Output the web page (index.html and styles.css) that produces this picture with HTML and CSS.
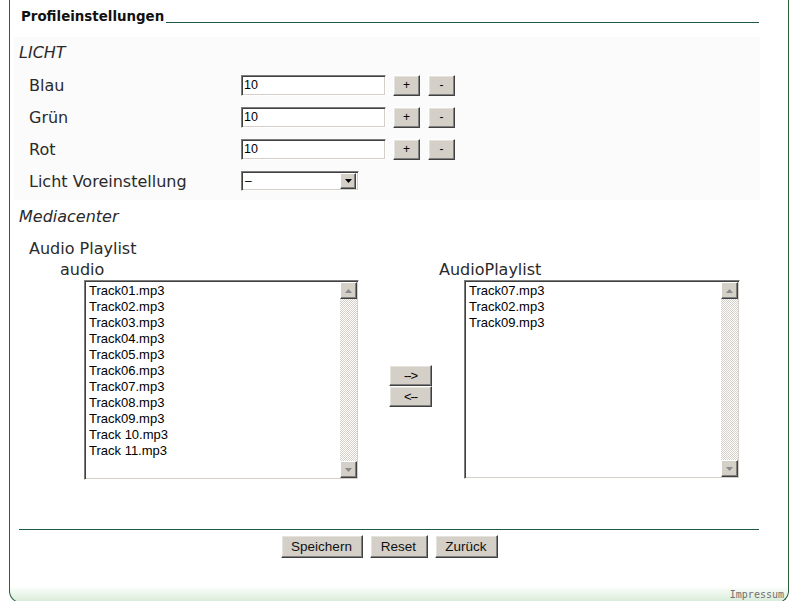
FILE: index.html
```html
<!DOCTYPE html>
<html lang="de">
<head>
<meta charset="utf-8">
<title>Profileinstellungen</title>
<link rel="stylesheet" href="styles.css">
</head>
<body>
<div class="frame">
  <div class="header"><span class="title">Profileinstellungen</span><span class="rule"></span></div>

  <div class="band">
    <div class="section-title">LICHT</div>
    <div class="row"><span class="label">Blau</span><input class="num" type="text" value="10"><button class="btn plus">+</button><button class="btn minus">-</button></div>
    <div class="row"><span class="label">Grün</span><input class="num" type="text" value="10"><button class="btn plus">+</button><button class="btn minus">-</button></div>
    <div class="row"><span class="label">Rot</span><input class="num" type="text" value="10"><button class="btn plus">+</button><button class="btn minus">-</button></div>
    <div class="row"><span class="label">Licht Voreinstellung</span>
      <div class="select"><span class="sel-val">–</span><span class="sel-btn"><svg width="7" height="4" viewBox="0 0 7 4"><polygon points="0,0 7,0 3.5,4" fill="#000"/></svg></span></div>
    </div>
  </div>

  <div class="section-title media-title">Mediacenter</div>

  <div class="media-row">
    <div class="col-left">
      <div class="cap">Audio Playlist</div>
      <div class="cap sub">audio</div>
      <div class="listbox left-list">
        <div class="items">
          <div>Track01.mp3</div><div>Track02.mp3</div><div>Track03.mp3</div><div>Track04.mp3</div>
          <div>Track05.mp3</div><div>Track06.mp3</div><div>Track07.mp3</div><div>Track08.mp3</div>
          <div>Track09.mp3</div><div>Track 10.mp3</div><div>Track 11.mp3</div>
        </div>
        <div class="scroll">
          <span class="sb-btn"><svg width="7" height="4" viewBox="0 0 7 4"><polygon points="3.5,0 7,4 0,4" fill="#8a8a8a"/></svg></span>
          <span class="track"></span>
          <span class="sb-btn"><svg width="7" height="4" viewBox="0 0 7 4"><polygon points="0,0 7,0 3.5,4" fill="#8a8a8a"/></svg></span>
        </div>
      </div>
    </div>

    <div class="mover">
      <button class="btn move">--&gt;</button>
      <button class="btn move">&lt;--</button>
    </div>

    <div class="col-right">
      <div class="cap">AudioPlaylist</div>
      <div class="listbox right-list">
        <div class="items">
          <div>Track07.mp3</div><div>Track02.mp3</div><div>Track09.mp3</div>
        </div>
        <div class="scroll">
          <span class="sb-btn"><svg width="7" height="4" viewBox="0 0 7 4"><polygon points="3.5,0 7,4 0,4" fill="#8a8a8a"/></svg></span>
          <span class="track"></span>
          <span class="sb-btn"><svg width="7" height="4" viewBox="0 0 7 4"><polygon points="0,0 7,0 3.5,4" fill="#8a8a8a"/></svg></span>
        </div>
      </div>
    </div>
  </div>

  <div class="footer-rule"></div>
  <div class="actions">
    <button class="btn action save">Speichern</button>
    <button class="btn action reset">Reset</button>
    <button class="btn action back">Zurück</button>
  </div>

  <div class="impressum">Impressum</div>
</div>
</body>
</html>
```

FILE: styles.css
```css
html, body {
  margin: 0;
  padding: 0;
  background: #ffffff;
}

body {
  font-family: "DejaVu Sans", Verdana, sans-serif;
  color: #1c1c1c;
}

.frame {
  box-sizing: border-box;
  margin-left: 9px;
  width: 780px;
  height: 603px;
  border: 1px solid #2d5f3c;
  border-top: none;
  border-radius: 0 0 12px 12px;
  display: flex;
  flex-direction: column;
  background: linear-gradient(to bottom, #ffffff 0, #ffffff calc(100% - 16px), #d6ebd6 100%);
}

/* header */
.header {
  box-sizing: border-box;
  width: 749px;
  padding: 9px 0 0 11px;
  display: flex;
  align-items: flex-end;
}

.title {
  font-weight: bold;
  font-size: 13.4px;
  line-height: 16px;
  color: #111;
}

.rule {
  flex: 1;
  margin-left: 2px;
  margin-bottom: 2px;
  border-bottom: 1px solid #1f5a48;
}

/* light section */
.band {
  margin: 12px 0 0 4px;
  width: 746px;
  background: #fbfbfb;
  padding-bottom: 3px;
}

.section-title {
  font-style: italic;
  font-size: 16px;
  line-height: 32px;
  padding-left: 5px;
  color: #2a2a2a;
}

.row {
  display: flex;
  align-items: center;
  height: 32px;
  padding-left: 15px;
}

.label {
  width: 212px;
  font-size: 16px;
  color: #2a2a2a;
}

.num {
  box-sizing: border-box;
  width: 145px;
  height: 21px;
  margin: 0;
  padding: 0 0 0 2px;
  border: 1px solid;
  border-color: #7c7c7c #ffffff #ffffff #7c7c7c;
  box-shadow: inset 1px 1px 0 #404040, inset -1px -1px 0 #d4d0c8;
  background: #fff;
  font-family: "Liberation Sans", Arial, sans-serif;
  font-size: 12.5px;
  color: #000;
  outline: none;
}

.btn {
  box-sizing: border-box;
  margin: 0;
  padding: 0;
  background: #d4d0c8;
  border: 1px solid;
  border-color: #ffffff #404040 #404040 #ffffff;
  box-shadow: inset -1px -1px 0 #808080, inset 1px 1px 0 #e6e3dd;
  font-family: "Liberation Sans", Arial, sans-serif;
  font-size: 12px;
  color: #000;
  cursor: default;
}

.plus, .minus {
  width: 27px;
  height: 21px;
  line-height: 17px;
}

.plus { margin-left: 7px; }
.minus { margin-left: 8px; }

.select {
  box-sizing: border-box;
  width: 118px;
  height: 20px;
  display: flex;
  align-items: center;
  border: 1px solid;
  border-color: #7c7c7c #ffffff #ffffff #7c7c7c;
  box-shadow: inset 1px 1px 0 #404040, inset -1px -1px 0 #d4d0c8;
  background: #fff;
  padding: 2px;
}

.sel-val {
  flex: 1;
  font-family: "Liberation Sans", Arial, sans-serif;
  font-size: 12px;
  padding-left: 1px;
  color: #000;
}

.sel-btn {
  box-sizing: border-box;
  width: 16px;
  height: 16px;
  display: flex;
  align-items: center;
  justify-content: center;
  background: #d4d0c8;
  border: 1px solid;
  border-color: #ffffff #404040 #404040 #ffffff;
  box-shadow: inset -1px -1px 0 #808080;
}

/* media section */
.media-title {
  line-height: 34px;
  padding-left: 9px;
}

.media-row {
  display: flex;
  align-items: flex-start;
  padding-top: 4px;
}

.col-left {
  padding-left: 19px;
}

.cap {
  font-size: 16px;
  line-height: 21px;
  color: #2a2a2a;
}

.cap.sub {
  padding-left: 31px;
}

.listbox {
  box-sizing: border-box;
  display: flex;
  background: #fff;
  border: 1px solid;
  border-color: #7c7c7c #ffffff #ffffff #7c7c7c;
  box-shadow: inset 1px 1px 0 #404040, inset -1px -1px 0 #d4d0c8;
  padding: 1px;
}

.left-list {
  width: 275px;
  height: 200px;
  margin-left: 55px;
}

.right-list {
  width: 276px;
  height: 199px;
  margin-left: 25px;
}

.items {
  flex: 1;
  padding: 1px 0 0 3px;
  font-family: "Liberation Sans", Arial, sans-serif;
  font-size: 13px;
  line-height: 16px;
  color: #000;
}

.scroll {
  width: 17px;
  display: flex;
  flex-direction: column;
  background: repeating-conic-gradient(#d4d0c8 0 25%, #ffffff 0 50%) 0 0 / 2px 2px;
}

.track {
  flex: 1;
}

.sb-btn {
  box-sizing: border-box;
  width: 17px;
  height: 17px;
  display: flex;
  align-items: center;
  justify-content: center;
  background: #d4d0c8;
  border: 1px solid;
  border-color: #ffffff #404040 #404040 #ffffff;
  box-shadow: inset -1px -1px 0 #808080;
}

.mover {
  display: flex;
  flex-direction: column;
  margin: 127px 0 0 30px;
}

.move {
  width: 43px;
  height: 21px;
  font-size: 13px;
  letter-spacing: -1px;
}

.col-right {
  margin-left: 7px;
  padding-top: 21px;
}

/* footer */
.footer-rule {
  margin: 49px 0 0 9px;
  width: 740px;
  border-top: 1px solid #1f5a48;
}

.actions {
  margin: 5px 0 0 9px;
  width: 740px;
  display: flex;
  justify-content: center;
  gap: 7px;
}

.action {
  height: 23px;
  font-size: 13.5px;
  color: #111;
}

.save { width: 82px; }
.reset { width: 58px; }
.back { width: 63px; }

.impressum {
  margin-top: auto;
  align-self: flex-end;
  padding-right: 4px;
  margin-bottom: 1px;
  font-family: "DejaVu Sans Mono", monospace;
  font-size: 10px;
  line-height: 12px;
  color: #707070;
}
```
